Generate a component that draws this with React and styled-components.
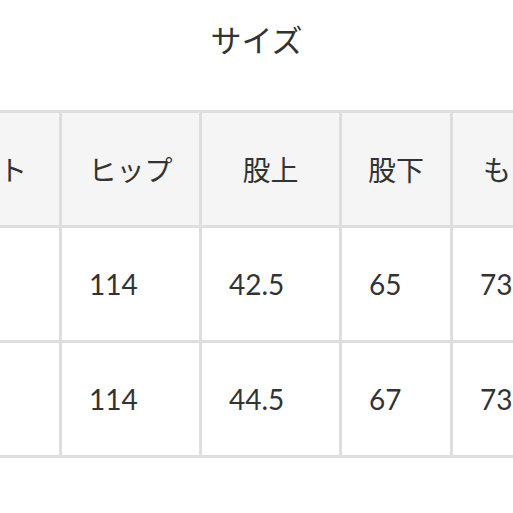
import React from "react";
import styled, { createGlobalStyle } from "styled-components";

const columns = [
  { label: "ウエスト", width: 176 },
  { label: "ヒップ", width: 137 },
  { label: "股上", width: 137 },
  { label: "股下", width: 108 },
  { label: "もも周り", width: 172 },
];

const rows = [
  ["76", "114", "42.5", "65", "73"],
  ["80", "114", "44.5", "67", "73"],
];

const GlobalStyle = createGlobalStyle`
  html, body {
    margin: 0;
    padding: 0;
    background: #fff;
    overflow: hidden;
  }
`;

const Page = styled.div`
  width: 513px;
  height: 513px;
  overflow: hidden;
  font-family: "Lato", "Noto Sans CJK JP", sans-serif;
  color: #333;
`;

const Title = styled.h2`
  margin: 20px 0 50px;
  font-size: 31px;
  line-height: 40px;
  font-weight: 400;
  text-align: center;
  color: #333;
`;

const Grid = styled.div`
  display: grid;
  grid-template-columns: ${(p) => p.$cols};
  grid-auto-rows: 112px;
  gap: 3px;
  padding: 3px;
  width: max-content;
  margin-left: -120px;
  background: #dedede;
`;

const HeadCell = styled.div`
  display: flex;
  align-items: center;
  justify-content: center;
  background: #f5f5f5;
  font-size: 28px;
  white-space: nowrap;
`;

const Cell = styled.div`
  display: flex;
  align-items: center;
  padding-left: 27px;
  background: #fff;
  font-size: 28px;
  white-space: nowrap;
`;

export default function App() {
  const cols = columns.map((c) => `${c.width}px`).join(" ");
  return (
    <Page>
      <GlobalStyle />
      <Title>サイズ</Title>
      <Grid $cols={cols}>
        {columns.map((c) => (
          <HeadCell key={c.label}>{c.label}</HeadCell>
        ))}
        {rows.map((r, i) =>
          r.map((v, j) => <Cell key={`${i}-${j}`}>{v}</Cell>)
        )}
      </Grid>
    </Page>
  );
}
